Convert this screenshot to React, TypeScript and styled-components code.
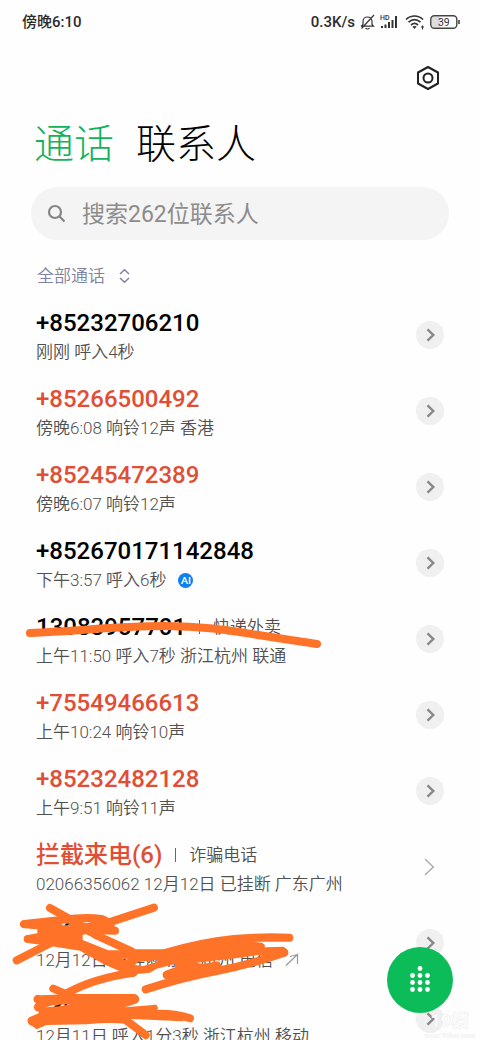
import React from "react";
import styled, { createGlobalStyle } from "styled-components";

const Global = createGlobalStyle`
  *, *::before, *::after { box-sizing: border-box; }
  body { margin: 0; background: #fefefe; }
  button, input { font: inherit; color: inherit; border: 0; padding: 0; background: none; }
  button { cursor: pointer; }
`;

const Page = styled.div`
  position: relative;
  height: 100vh;
  overflow: hidden;
  background: #fefefe;
  color: #000;
  font-family: Roboto, "Noto Sans CJK SC", sans-serif;
`;

const StatusBar = styled.header`
  display: flex;
  align-items: center;
  justify-content: space-between;
  height: 44px;
  padding: 0 19px 0 22px;
  font-size: 15px;
  line-height: 20px;
  font-weight: 500;
  color: #2c2c2c;
`;

const StatusIcons = styled.div`
  display: flex;
  align-items: center;
  gap: 5px;
`;

const Toolbar = styled.div`
  display: flex;
  justify-content: flex-end;
  padding: 20px 38px 0 0;
`;

const IconButton = styled.button`
  display: flex;
  width: 28px;
  height: 28px;
`;

const Tabs = styled.nav`
  display: flex;
  gap: 22px;
  padding: 23px 34px 0;
`;

const Tab = styled.button<{ $active?: boolean }>`
  font-size: 40px;
  line-height: 60px;
  font-weight: 300;
  color: ${(p) => (p.$active ? "#12b35a" : "#000")};
`;

const SearchBox = styled.label`
  display: flex;
  align-items: center;
  gap: 16px;
  height: 53px;
  margin: 12px 31px 0;
  padding: 0 16px;
  border-radius: 27px;
  background: #f4f4f4;
`;

const SearchInput = styled.input`
  flex: 1;
  min-width: 0;
  padding-top: 2px;
  outline: none;
  font-size: 23px;
  line-height: 34px;
  &::placeholder { color: #8c8c8c; opacity: 1; }
`;

const Filter = styled.button`
  display: flex;
  align-items: center;
  gap: 13px;
  margin: 24px 37px 0;
  font-size: 17px;
  line-height: 24px;
  font-weight: 350;
  color: #7e82a0;
`;

const CallList = styled.ul`
  margin: 9px 0 0;
  padding: 0;
  list-style: none;
`;

const CallRow = styled.li`
  display: flex;
  align-items: center;
  justify-content: space-between;
  height: 76px;
  padding: 0 36px;
`;

const CallText = styled.div`
  display: flex;
  flex-direction: column;
  padding-top: 2px;
`;

const Title = styled.div`
  display: flex;
  align-items: center;
  gap: 13px;
  height: 32px;
`;

const Caller = styled.span<{ $missed?: boolean }>`
  font-size: 24px;
  line-height: 32px;
  font-weight: 500;
  color: ${(p) => (p.$missed ? "#e04e35" : "#000")};
`;

const Divider = styled.i`
  width: 1px;
  height: 14px;
  background: #666;
`;

const Note = styled.span`
  display: flex;
  align-items: center;
  gap: 12px;
  font-size: 17px;
  line-height: 26px;
  font-weight: 350;
  white-space: nowrap;
  color: #505050;
`;

const AiBadge = styled.span`
  width: 15px;
  height: 15px;
  border-radius: 50%;
  background: #0f80ee;
  color: #fff;
  font: bold 10px/15px Lato, sans-serif;
  text-align: center;
`;

const Detail = styled.button<{ $plain?: boolean }>`
  display: flex;
  align-items: center;
  justify-content: center;
  width: 28px;
  height: 28px;
  border-radius: 50%;
  background: ${(p) => (p.$plain ? "transparent" : "#f0f0f0")};
`;

const Marks = styled.svg`
  position: absolute;
  top: 0;
  left: 0;
  pointer-events: none;
`;

const DialButton = styled.button`
  position: absolute;
  right: 27px;
  bottom: 27px;
  display: flex;
  align-items: center;
  justify-content: center;
  width: 66px;
  height: 66px;
  border-radius: 50%;
  background: #0cbc59;
`;

const Watermark = styled.div`
  position: absolute;
  right: 5px;
  bottom: 0;
  text-align: center;
  font-size: 18px;
  line-height: 22px;
  font-weight: 700;
  color: #fbfbfb;
  text-shadow: 0 0 1px #ddd;
  pointer-events: none;
`;

const WatermarkUrl = styled.div`
  font-size: 7px;
  line-height: 8px;
`;

type Call = {
  caller: string;
  note: string;
  missed?: boolean;
  tag?: string;
  ai?: boolean;
  plain?: boolean;
  outgoing?: boolean;
};

const calls: Call[] = [
  { caller: "+85232706210", note: "刚刚 呼入4秒" },
  { caller: "+85266500492", note: "傍晚6:08 响铃12声 香港", missed: true },
  { caller: "+85245472389", note: "傍晚6:07 响铃12声", missed: true },
  { caller: "+852670171142848", note: "下午3:57 呼入6秒", ai: true },
  { caller: "13083957701", note: "上午11:50 呼入7秒 浙江杭州 联通", tag: "快递外卖" },
  { caller: "+75549466613", note: "上午10:24 响铃10声", missed: true },
  { caller: "+85232482128", note: "上午9:51 响铃11声", missed: true },
  { caller: "拦截来电(6)", note: "02066356062 12月12日 已挂断 广东广州", missed: true, tag: "诈骗电话", plain: true },
  { caller: "139", note: "12月12日 已挂断 浙江杭州 电信", outgoing: true },
  { caller: "139", note: "12月11日 呼入1分3秒 浙江杭州 移动" },
];

const MuteIcon = () => (
  <svg width="15" height="16" viewBox="0 0 15 16" fill="none" stroke="#333" strokeWidth="1.2">
    <path d="M1 12.200h12.500L12 10.500V7.500C12 4.500 10 3 7.500 3S3 4.500 3 7.500V10.500L1 12.500M5.500 14C6.500 15.300 8.500 15.300 9.500 14M14 1 1.500 14.500" />
  </svg>
);

const SignalIcon = () => (
  <svg width="20" height="18" viewBox="0 0 20 18" fill="#333">
    <text x="0" y="7" fontSize="7" fontFamily="Roboto, sans-serif" fontWeight="500">HD</text>
    <path d="M1 13h2v2H1zM4.500 11.500h2V15h-2zM8 9h2v6H8zM11.500 7h2v8h-2zM15 3h2v12h-2z" />
  </svg>
);

const WifiIcon = () => (
  <svg width="20" height="16" viewBox="0 0 20 16" fill="none" stroke="#333" strokeWidth="1.7">
    <path d="M1 5.500C6 .8 13 .8 18 5.500M3.500 8.200C7.300 4.800 11.700 4.800 15.500 8.200M6 11C8.300 9 10.700 9 13 11" />
    <path d="M7.300 12.600Q9.500 11.200 11.700 12.600L9.500 15Z" fill="#333" stroke="none" />
    <path d="M17.500 11.500v4M16 13h3" strokeWidth="1" />
  </svg>
);

const BatteryIcon = () => (
  <svg width="31" height="14" viewBox="0 0 31 14">
    <rect x="1.700" y="1.700" width="9" height="10.600" rx="2" fill="#ddd" />
    <rect x=".8" y=".8" width="26" height="12.400" rx="3.500" fill="none" stroke="#444" strokeWidth="1.400" />
    <path d="M29 5v4" stroke="#444" strokeWidth="1.600" />
    <text x="13.800" y="10.800" fontSize="10.500" textAnchor="middle" fill="#333" fontFamily="Roboto, sans-serif" fontWeight="400">39</text>
  </svg>
);

const SettingsIcon = () => (
  <svg width="28" height="28" viewBox="0 0 28 28" fill="none" stroke="#222" strokeWidth="2" strokeLinejoin="round">
    <path d="M14 3 24 8.500V19.500L14 25 4 19.500V8.500Z" />
    <circle cx="14" cy="14" r="4.500" />
  </svg>
);

const SearchIcon = () => (
  <svg width="19" height="19" viewBox="0 0 19 19" fill="none" stroke="#858585" strokeWidth="2.200">
    <circle cx="8" cy="8" r="6" />
    <path d="m12.300 12.300 5.200 5.200" />
  </svg>
);

const SortIcon = () => (
  <svg width="13" height="16" viewBox="0 0 13 16" fill="none" stroke="#7e82a0" strokeWidth="1.500">
    <path d="m2 6 4.500-4.300L11 6M2 10l4.500 4.300L11 10" />
  </svg>
);

const Chevron = ({ plain }: { plain?: boolean }) =>
  plain ? (
    <svg width="28" height="28" viewBox="0 0 28 28" fill="none" stroke="#aaa" strokeWidth="1.400">
      <path d="m9 6 8.300 8L9 22" />
    </svg>
  ) : (
    <svg width="28" height="28" viewBox="0 0 28 28" fill="none" stroke="#888" strokeWidth="2.400">
      <path d="m11.500 8.300 5.800 5.700-5.800 5.700" />
    </svg>
  );

const OutgoingIcon = () => (
  <svg width="14" height="14" viewBox="0 0 14 14" fill="none" stroke="#999" strokeWidth="1.200">
    <path d="M1 12.500 12.500 1.500V11M5 3.500l7.500-2" />
  </svg>
);

const PenMarks = () => (
  <Marks width="480" height="1040" viewBox="0 0 480 1040" fill="none" stroke="#ff7328" strokeLinecap="round" strokeLinejoin="round" aria-hidden>
    <path d="M30 633C80 631 115 626 165 626S240 633 317 644" strokeWidth="8" />
    <g transform="translate(0 890) scale(.33333)" strokeWidth="24">
      <path d="M150 54 205 85M462 53 325 98M50 211 170 150M200 310Q280 265 400 248M285 134 395 184M437 298Q550 262 650 243T853 188M500 255 650 226" />
      <path d="M160 296 235 328M440 373Q520 367 570 385M370 385 437 435" />
      <g fill="#ff7328" fillRule="evenodd" stroke="none">
        <path d="M72 90L190 77Q260 68 310 76Q335 84 345 110A12 12 0 0 1 345 134L290 133L402 178L490 178Q600 145 700 135Q780 128 868 131A12 12 0 0 1 868 155L760 155L785 158Q800 165 793 172L850 170Q872 180 860 198L800 208L780 194L720 203L640 212L590 218L660 232L560 262L500 267L495 243L525 232L525 222L470 236L450 248L410 252L400 262L385 255L310 222L240 182L165 170L83 159A12 12 0 0 1 83 135L112 130L112 118L72 115A12 12 0 0 1 72 90ZM187 101L208 101L207 106L187 106ZM248 134L258 133L360 181L325 181L248 150ZM366 206L384 206L375 210ZM404 225L415 216L470 210L472 215L430 228ZM248 97L272 96L260 100Z" />
        <path d="M120 316L235 312L400 312A15 15 0 0 1 405 342L375 352L460 345A9 9 0 0 1 468 362L550 372L550 394L395 387L380 402Q330 395 260 403L140 405L110 418L95 407A14 14 0 0 1 88 382L116 370L116 364A13 13 0 0 1 108 340A13 13 0 0 1 120 316ZM138 352L160 345L212 343L185 348Z" />
      </g>
    </g>
  </Marks>
);

const DialpadIcon = () => (
  <svg width="24" height="30" viewBox="0 0 24 30" fill="#fff">
    <circle cx="12" cy="3.500" r="2.400" />
    {[10.500, 17.500, 24.500].map((y) =>
      [4.500, 12, 19.500].map((x) => <circle key={`${x}-${y}`} cx={x} cy={y} r="2.400" />)
    )}
  </svg>
);

export default function App() {
  return (
    <>
      <Global />
      <Page>
        <StatusBar>
          <time>傍晚6:10</time>
          <StatusIcons>
            <span>0.3K/s</span>
            <MuteIcon />
            <SignalIcon />
            <WifiIcon />
            <BatteryIcon />
          </StatusIcons>
        </StatusBar>
        <Toolbar>
          <IconButton aria-label="设置"><SettingsIcon /></IconButton>
        </Toolbar>
        <Tabs>
          <Tab $active>通话</Tab>
          <Tab>联系人</Tab>
        </Tabs>
        <SearchBox>
          <SearchIcon />
          <SearchInput type="text" aria-label="搜索" placeholder="搜索262位联系人" />
        </SearchBox>
        <Filter>
          全部通话
          <SortIcon />
        </Filter>
        <CallList>
          {calls.map((call, i) => (
            <CallRow key={i}>
              <CallText>
                <Title>
                  <Caller $missed={call.missed}>{call.caller}</Caller>
                  {call.tag && <><Divider /><Note>{call.tag}</Note></>}
                </Title>
                <Note>
                  {call.note}
                  {call.ai && <AiBadge>AI</AiBadge>}
                  {call.outgoing && <OutgoingIcon />}
                </Note>
              </CallText>
              <Detail $plain={call.plain} aria-label="通话详情"><Chevron plain={call.plain} /></Detail>
            </CallRow>
          ))}
        </CallList>
        <PenMarks />
        <Watermark>
          19楼
          <WatermarkUrl>www.19lou.com</WatermarkUrl>
        </Watermark>
        <DialButton aria-label="拨号盘"><DialpadIcon /></DialButton>
      </Page>
    </>
  );
}
